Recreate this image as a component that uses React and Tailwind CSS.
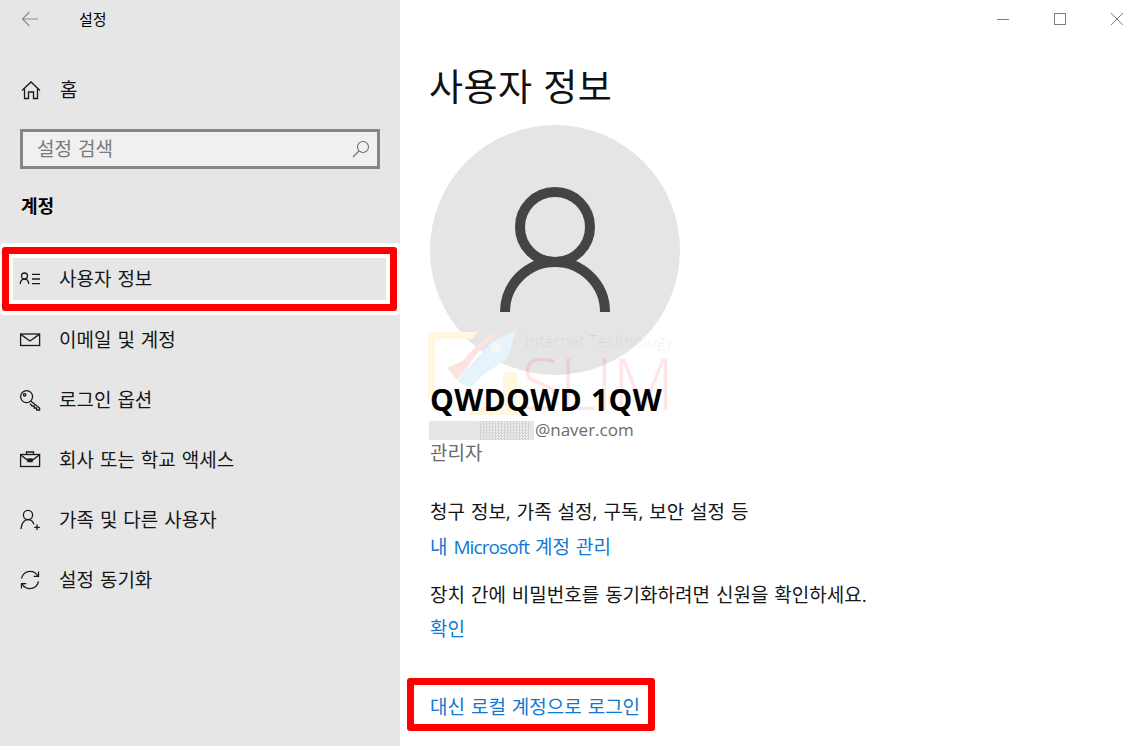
const FONT = "font-['Open_Sans','Noto_Sans_CJK_KR',sans-serif]"

function NavIcon({ children }) {
  return (
    <svg width="22" height="22" viewBox="0 0 22 22" fill="none" stroke="#1a1a1a" strokeWidth="1.3" className="shrink-0">
      {children}
    </svg>
  )
}

const navItems = [
  {
    label: "사용자 정보",
    icon: (
      <>
        <circle cx="5.500" cy="8" r="3" />
        <path d="M1.200 16c.3-3 2-4.800 4.300-4.800S9.500 13 9.800 16" />
        <path d="M13 6.300h8M13 11h8M13 15.600h8" />
      </>
    ),
  },
  {
    label: "이메일 및 계정",
    icon: (
      <>
        <rect x="1.600" y="5" width="19" height="11.500" />
        <path d="M1.800 5.400 11 12l9.200-6.600" />
      </>
    ),
  },
  {
    label: "로그인 옵션",
    icon: (
      <>
        <circle cx="7.600" cy="7.600" r="6" />
        <circle cx="5.600" cy="5.800" r="1.200" />
        <path d="M11.600 12 20.600 19v2h-3v-2h-2.400v-2h-2.200l-2-2.400" />
      </>
    ),
  },
  {
    label: "회사 또는 학교 액세스",
    icon: (
      <>
        <rect x="1.600" y="5.500" width="19" height="12" />
        <path d="M7.500 5.500V3h7v2.500" />
        <path d="M1.800 6 9 11.500h4L20.200 6" />
        <rect x="9" y="10" width="4" height="2.600" fill="#1a1a1a" />
      </>
    ),
  },
  {
    label: "가족 및 다른 사용자",
    icon: (
      <>
        <circle cx="9" cy="6" r="4.600" />
        <path d="M2 20c.4-5.500 3.200-9.400 7-9.400 2.800 0 5 1.800 6 4.800" />
        <path d="M18 15.500v5.500M15.300 18.300h5.500" />
      </>
    ),
  },
  {
    label: "설정 동기화",
    icon: (
      <>
        <path d="M2.500 9.500C3.500 5.200 7 2.300 11 2.300c3.200 0 6 1.600 7.800 4.500" />
        <path d="M19.500 2.500v4.800h-4.800" />
        <path d="M19.500 12.500c-1 4.300-4.500 7.200-8.500 7.200-3.200 0-6-1.600-7.800-4.500" />
        <path d="M2.500 19.500v-4.800h4.800" />
      </>
    ),
  },
]

function Sidebar() {
  return (
    <aside className="w-[400px] h-[746px] shrink-0 bg-[#e6e6e6] flex flex-col">
      <div className="h-[38px] flex items-center pl-[21px]">
        <svg width="18" height="16" viewBox="0 0 18 16" fill="none" stroke="#8a8a8a" strokeWidth="1.100">
          <path d="M17 8H1.500M8.500 1 1.500 8l7 7" />
        </svg>
        <span className="ml-[40px] text-[15px] text-black">설정</span>
      </div>

      <div className="h-[66px] mt-[19px] flex items-center pl-[21px]">
        <svg width="20" height="20" viewBox="0 0 20 20" fill="none" stroke="#1a1a1a" strokeWidth="1.300">
          <path d="M1 10.500 10 2l9 8.500" />
          <path d="M3.500 8.500V18.500h4v-6.500h5v6.500h4V8.500" />
        </svg>
        <span className="ml-[19px] text-[19px] text-[#111]">홈</span>
      </div>

      <div className="mx-[20px] mt-[6px] h-[40px] border-[3px] border-[#868686] bg-[#f0f0f0] flex items-center justify-between pl-[14px] pr-[7px]">
        <span className="text-[19px] text-[#7a7a7a] [word-spacing:1px]">설정 검색</span>
        <svg width="18" height="18" viewBox="0 0 18 18" fill="none" stroke="#6f6f6f" strokeWidth="1.100">
          <circle cx="11" cy="7" r="5.500" />
          <path d="M7 11 1 17" />
        </svg>
      </div>

      <div className="h-[34px] mt-[20px] flex items-center pl-[21px] text-[18px] font-bold text-black">계정</div>

      <nav className="mt-[27px] flex flex-col">
        {navItems.map((item) => (
          <div key={item.label} className="h-[60px] flex items-center pl-[19px]">
            <NavIcon>{item.icon}</NavIcon>
            <span className="ml-[18px] text-[19px] text-[#161616] [word-spacing:1px]">{item.label}</span>
          </div>
        ))}
      </nav>
    </aside>
  )
}

function WindowControls() {
  return (
    <div className="h-[38px] flex items-center justify-end gap-[45px] pr-[10px]">
      <svg width="12" height="12" viewBox="0 0 12 12" stroke="#7d7d7d" fill="none"><path d="M0 6.500h12" /></svg>
      <svg width="12" height="12" viewBox="0 0 12 12" stroke="#7d7d7d" fill="none"><rect x=".5" y=".5" width="11" height="11" /></svg>
      <svg width="12" height="12" viewBox="0 0 12 12" stroke="#7d7d7d" fill="none"><path d="m0 0 12 12M12 0 0 12" /></svg>
    </div>
  )
}

function Watermark() {
  return (
    <div className="absolute left-[428px] top-[330px] w-[250px] h-[86px]">
      <svg width="95" height="86" viewBox="0 0 95 86" className="absolute left-0 top-0" fill="none">
        <path d="M0 2h50l-6 7H7v53l-7 8zM75 42h14v43H40l6-8h29z" fill="#fff7e0" />
        <path d="M77 0C60 4 48 14 36 30L19 38l10 12 11-14C50 20 62 10 77 0z" fill="#fbe3e0" />
        <path d="M88 0 64 12 34 44l-4 8 12 6 13-13 25-17z" fill="#e6f3fa" />
        <circle cx="68" cy="18" r="5" fill="#f7f7f7" />
      </svg>
      <span className="absolute left-[97px] top-[0px] text-[15.500px] tracking-[0.2px] text-black/[0.06] font-['Open_Sans',sans-serif] whitespace-nowrap">Internet Technology</span>
      <span className="absolute left-[93px] top-[2px] text-[72px] leading-[100px] font-light -tracking-[1px] text-[#ff0000]/[0.1] font-['Open_Sans',sans-serif] whitespace-nowrap">SLIM</span>
    </div>
  )
}

function Main() {
  return (
    <main className="relative flex-1 h-[746px] bg-white">
      <WindowControls />
      <div className="flex flex-col pl-[30px] [word-spacing:1px]">
        <h1 className="h-[72px] mt-[13px] flex items-center text-[37px] font-normal text-[#111] -ml-[1px] tracking-[0.4px]">사용자 정보</h1>
        <div className="mt-[2px] w-[250px] h-[250px] rounded-full bg-[#e5e5e5] flex items-center justify-center">
          <svg width="124" height="134" viewBox="0 0 124 134" fill="none" stroke="#444444" strokeWidth="10">
            <circle cx="62" cy="44" r="35" />
            <path d="M12 129a50 50 0 0 1 100 0" />
          </svg>
        </div>
        <div className="h-[48px] flex items-center text-[30px] font-bold text-black tracking-[0.3px] z-10 relative">QWDQWD 1QW</div>
        <div className="h-[20px] mt-[-3px] flex items-center">
          <div className="w-[105px] h-[19px] -ml-[1px] bg-[#e6e6e6] flex justify-end">
            <div className="w-[50px] h-[19px] mr-[5px] bg-[repeating-conic-gradient(#d2d2d2_0_25%,#efefef_0_50%)] bg-[length:3px_3px]" />
          </div>
          <span className="text-[17px] text-[#6b6b6b] ml-[1px]">@naver.com</span>
        </div>
        <div className="h-[30px] mt-[-2px] flex items-center text-[19px] text-[#6b6b6b]">관리자</div>
        <div className="h-[30px] mt-[29px] flex items-center text-[19px] text-[#161616]">청구 정보, 가족 설정, 구독, 보안 설정 등</div>
        <div className="h-[30px] mt-[5px] flex items-center text-[19px] text-[#0f78d4]">
          <span>내 <span className="tracking-[-0.9px]">Microsoft</span> 계정 관리</span>
        </div>
        <div className="h-[30px] mt-[18px] flex items-center text-[19px] text-[#161616]">장치 간에 비밀번호를 동기화하려면 신원을 확인하세요.</div>
        <div className="h-[30px] mt-[4px] flex items-center text-[19px] text-[#0f78d4]">확인</div>
        <div className="h-[30px] mt-[48px] flex items-center text-[19px] text-[#0f78d4]">대신 로컬 계정으로 로그인</div>
      </div>
    </main>
  )
}

export default function App() {
  return (
    <div className={`relative w-[1133px] h-[746px] overflow-hidden flex ${FONT}`}>
      <Sidebar />
      <Main />
      <Watermark />
      {/* annotation boxes drawn over the capture */}
      <div className="absolute left-0 top-[243px] w-[400px] h-[72px] bg-white rounded-[4px] p-[4px] pl-[2px] pr-[3px]">
        <div className="w-full h-full border-[7px] border-[#ff0000] rounded-[3px] bg-white p-[4px]">
          <div className="w-full h-full bg-[#e6e6e6] flex items-center pl-[6px]">
            <NavIcon>{navItems[0].icon}</NavIcon>
            <span className="ml-[18px] text-[19px] text-[#161616] [word-spacing:1px]">{navItems[0].label}</span>
          </div>
        </div>
      </div>
      <div className="absolute left-[407px] top-[678px] w-[248px] h-[53px] border-[7px] border-[#ff0000] rounded-[3px]" />
    </div>
  )
}
